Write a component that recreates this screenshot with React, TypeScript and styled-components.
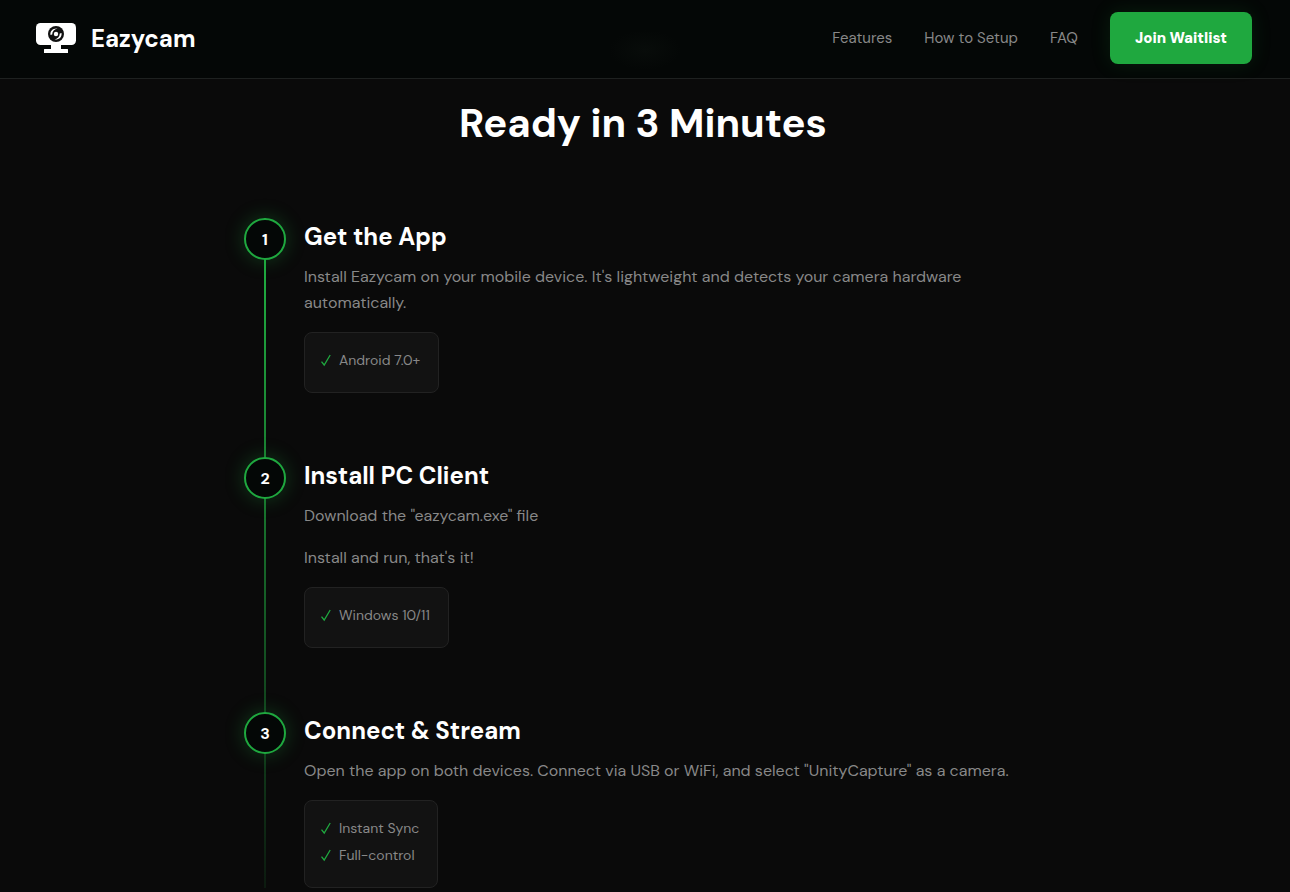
import React from "react";
import styled, { createGlobalStyle } from "styled-components";

const GlobalStyle = createGlobalStyle`
  * { box-sizing: border-box; }
  body {
    margin: 0;
    background: #0a0a0a;
    color: #ffffff;
    font-family: "DM Sans", Inter, "Open Sans", sans-serif;
    font-size: 16px;
    overflow-x: hidden;
  }
  h2, h3, p, ol, ul { margin: 0; padding: 0; }
  ol, ul { list-style: none; }
`;

const Header = styled.header`
  position: sticky;
  top: 0;
  z-index: 10;
  display: flex;
  align-items: center;
  justify-content: space-between;
  padding: 12px 38px 14px 36px;
  border-bottom: 1px solid #1e2120;
  background:
    radial-gradient(ellipse 36px 20px at 50% 50px, #080c0a, transparent),
    #040706;
`;

const Brand = styled.a`
  display: flex;
  align-items: center;
  gap: 15px;
  color: #ffffff;
  font-size: 24px;
  font-weight: 700;
  text-decoration: none;
`;

const Nav = styled.nav`
  display: flex;
  align-items: center;
  gap: 32px;
`;

const NavLink = styled.a`
  color: #888888;
  font-size: 15px;
  text-decoration: none;
`;

const JoinButton = styled.button`
  height: 52px;
  padding: 0 25px;
  border: 0;
  border-radius: 8px;
  background: #1fa83f;
  box-shadow: 0 0 20px rgba(31, 168, 63, 0.15);
  color: #ffffff;
  font: inherit;
  font-size: 15px;
  font-weight: 900;
  cursor: pointer;
`;

const Main = styled.main`
  padding: 12px 4px 4px 0;
`;

const Title = styled.h2`
  margin-bottom: 63px;
  font-size: 40px;
  font-weight: 700;
  line-height: 64px;
  text-align: center;
`;

const Steps = styled.ol`
  position: relative;
  display: flex;
  flex-direction: column;
  gap: 64px;
  max-width: 800px;
  margin: 0 auto;

  &::before {
    content: "";
    position: absolute;
    top: 0;
    bottom: 0;
    left: 21px;
    width: 2px;
    background: linear-gradient(to bottom, #1fa83f, #1fa83f 10%, rgba(31, 168, 63, 0.1));
  }
`;

const StepRow = styled.li`
  position: relative;
  display: grid;
  grid-template-columns: 44px 1fr;
  column-gap: 17px;
`;

const StepNumber = styled.span`
  display: flex;
  align-items: center;
  justify-content: center;
  justify-self: center;
  width: 42px;
  height: 42px;
  border: 2px solid #1fa83f;
  border-radius: 50%;
  background: #040706;
  box-shadow: 0 0 20px rgba(31, 168, 63, 0.3);
  font-size: 16px;
  font-weight: 700;
`;

const StepTitle = styled.h3`
  margin-bottom: 8px;
  font-size: 24px;
  font-weight: 700;
  line-height: 38px;
`;

const StepText = styled.p`
  margin-bottom: 16px;
  color: #888888;
  line-height: 26px;
`;

const Checklist = styled.ul`
  width: fit-content;
  padding: 16px 18px 16px 16px;
  border: 1px solid #222222;
  border-radius: 8px;
  background: #121212;
`;

const CheckItem = styled.li`
  display: flex;
  align-items: center;
  gap: 8px;
  height: 22px;
  margin-bottom: 5px;
  color: #888888;
  font-size: 14px;
`;

const LogoIcon = () => (
  <svg width="40" height="32" viewBox="0 0 40 32" aria-hidden="true">
    <rect width="40" height="22" y="1" rx="4.5" fill="#fff" />
    <path d="M15 23h10v4h6.5q.5 0 .5.5V31H8v-3.5q0-.5.5-.5H15z" fill="#fff" />
    <circle cx="20" cy="12" r="8" fill="#111" />
    <path d="M14.5 13C13.800 9 17 6 21.500 6.500C18.500 7.200 16.300 9 16.200 12.500z" fill="#fff" />
    <path d="M25.500 11C26.200 15 23 18 18.500 17.500C21.500 16.800 23.700 15 23.800 11.500z" fill="#fff" />
    <circle cx="20" cy="12" r="2.2" fill="#fff" />
  </svg>
);

const CheckIcon = () => (
  <svg width="10" height="14" viewBox="0 0 10 14" aria-hidden="true">
    <path d="M.5 8.6 3.2 12 9.2 2" fill="none" stroke="#1fa83f" strokeWidth="1.3" />
  </svg>
);

const steps = [
  {
    title: "Get the App",
    text: [
      "Install Eazycam on your mobile device. It's lightweight and detects your camera hardware automatically.",
    ],
    checks: ["Android 7.0+"],
  },
  {
    title: "Install PC Client",
    text: ['Download the "eazycam.exe" file', "Install and run, that's it!"],
    checks: ["Windows 10/11"],
  },
  {
    title: "Connect & Stream",
    text: ['Open the app on both devices. Connect via USB or WiFi, and select "UnityCapture" as a camera.'],
    checks: ["Instant Sync", "Full-control"],
  },
];

export default function App() {
  return (
    <>
      <GlobalStyle />
      <Header>
        <Brand href="#">
          <LogoIcon />
          Eazycam
        </Brand>
        <Nav>
          <NavLink href="#features">Features</NavLink>
          <NavLink href="#setup">How to Setup</NavLink>
          <NavLink href="#faq">FAQ</NavLink>
          <JoinButton type="button">Join Waitlist</JoinButton>
        </Nav>
      </Header>
      <Main id="setup">
        <Title>Ready in 3 Minutes</Title>
        <Steps>
          {steps.map((step, i) => (
            <StepRow key={step.title}>
              <StepNumber>{i + 1}</StepNumber>
              <div>
                <StepTitle>{step.title}</StepTitle>
                {step.text.map((line) => (
                  <StepText key={line}>{line}</StepText>
                ))}
                <Checklist>
                  {step.checks.map((check) => (
                    <CheckItem key={check}>
                      <CheckIcon />
                      {check}
                    </CheckItem>
                  ))}
                </Checklist>
              </div>
            </StepRow>
          ))}
        </Steps>
      </Main>
    </>
  );
}
